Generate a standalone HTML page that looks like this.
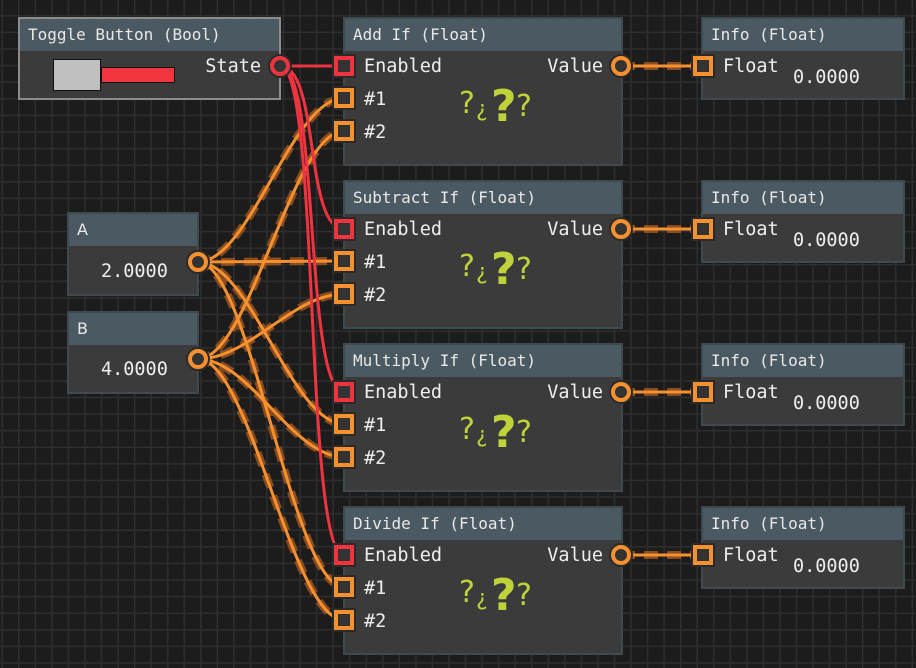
<!DOCTYPE html>
<html><head><meta charset="utf-8"><style>
html,body{margin:0;padding:0}
body{width:916px;height:668px;overflow:hidden;position:relative;background-color:#1c1c1c;
background-image:linear-gradient(to right,#2e2e2e 1.5px,transparent 1.5px),linear-gradient(to bottom,#2e2e2e 1.5px,transparent 1.5px);
background-size:16.55px 16.6px;background-position:1.5px -1.5px;font-family:"DejaVu Sans Mono","Liberation Mono",monospace;}
.n{position:absolute;background:#3b3b3b;border:2px solid #3f4a50;box-sizing:border-box}
.h{position:absolute;left:0;right:0;top:0;height:32px;background:#4b5a62;color:#e8e8e8;font-size:16px;line-height:32px;padding-left:8px;white-space:nowrap}
.t{position:absolute;color:#eee;font-size:18.5px;line-height:22px;white-space:nowrap}
.q{position:absolute;color:#bfd23a;font-family:"DejaVu Sans",sans-serif;font-weight:bold;white-space:nowrap;line-height:1}
svg{position:absolute;left:0;top:0}
</style></head><body>
<svg width="916" height="668" style="z-index:1">
<g fill="none" stroke-linecap="butt">
<g stroke="#9a5520" stroke-width="8" stroke-dasharray="14 9" opacity="0.85">
<path d="M198 262 C250 262,292 98,344 98"/><path d="M198 262 C250 262,292 261,344 261"/><path d="M198 262 C250 262,292 424,344 424"/><path d="M198 262 C250 262,292 587,344 587"/>
<path d="M198 359 C250 359,292 131,344 131"/><path d="M198 359 C250 359,292 294,344 294"/><path d="M198 359 C250 359,292 457,344 457"/><path d="M198 359 C250 359,292 620,344 620"/>
<path d="M621 66 H703"/><path d="M621 229 H703"/><path d="M621 392 H703"/><path d="M621 555 H703"/>
</g>
<g stroke="#f7902e" stroke-width="3">
<path d="M198 262 C250 262,292 98,344 98"/><path d="M198 262 C250 262,292 261,344 261"/><path d="M198 262 C250 262,292 424,344 424"/><path d="M198 262 C250 262,292 587,344 587"/>
<path d="M198 359 C250 359,292 131,344 131"/><path d="M198 359 C250 359,292 294,344 294"/><path d="M198 359 C250 359,292 457,344 457"/><path d="M198 359 C250 359,292 620,344 620"/>
<path d="M621 66 H703"/><path d="M621 229 H703"/><path d="M621 392 H703"/><path d="M621 555 H703"/>
</g>
<g stroke="#f0343f" stroke-width="3">
<path d="M280 66 H344"/><path d="M280 66 C320 66,304 229,344 229"/><path d="M280 66 C320 66,304 392,344 392"/><path d="M280 66 C320 66,304 555,344 555"/>
</g></g></svg>

<div class="n" style="left:18px;top:17px;width:263px;height:83px;border-color:#8c8c8c;z-index:2"><div class="h">Toggle Button (Bool)</div>
<div style="position:absolute;left:33px;top:40px;width:48px;height:32px;background:#c0c0c0;border:1px solid #111;box-sizing:border-box"></div>
<div style="position:absolute;left:81px;top:48px;width:74px;height:16px;background:#f2343f;border:1px solid #111;box-sizing:border-box"></div>
<div class="t" style="right:18px;top:37px">State</div></div>

<div class="n" style="left:67px;top:212px;width:132px;height:84px;z-index:2"><div class="h" style="font-family:'DejaVu Sans',sans-serif">A</div><div class="t" style="left:32px;top:47px">2.0000</div></div>
<div class="n" style="left:67px;top:311px;width:132px;height:83px;z-index:2"><div class="h" style="font-family:'DejaVu Sans',sans-serif">B</div><div class="t" style="left:32px;top:46px">4.0000</div></div>

<div id="ops"></div>
<script>
var names=["Add If (Float)","Subtract If (Float)","Multiply If (Float)","Divide If (Float)"],h="";
for(var i=0;i<4;i++){var y=17+163*i;
h+='<div class="n" style="left:343px;top:'+y+'px;width:280px;height:149px;z-index:2"><div class="h">'+names[i]+'</div>'+
'<div class="t" style="left:19px;top:37px">Enabled</div><div class="t" style="left:19px;top:70px">#1</div><div class="t" style="left:19px;top:103px">#2</div>'+
'<div class="t" style="right:18px;top:37px">Value</div>'+
'<div class="q" style="left:114px;top:70px;font-size:30px;font-weight:normal">?</div><div class="q" style="left:131px;top:80px;font-size:22px;font-weight:normal">¿</div><div class="q" style="left:146px;top:66px;font-size:44px">?</div><div class="q" style="left:171px;top:73px;font-size:30px;font-weight:normal">?</div></div>';
h+='<div class="n" style="left:701px;top:'+y+'px;width:204px;height:83px;z-index:2"><div class="h">Info (Float)</div><div class="t" style="left:20px;top:37px">Float</div><div class="t" style="left:90px;top:48px">0.0000</div></div>';}
document.getElementById("ops").innerHTML=h;
var s='<svg width="916" height="668" style="z-index:3">';
function circ(x,y,c){return '<circle cx="'+x+'" cy="'+y+'" r="12" fill="#2a2a2a"/><circle cx="'+x+'" cy="'+y+'" r="8" fill="#333" stroke="'+c+'" stroke-width="4"/>';}
function sq(x,y,c){return '<rect x="'+(x-12)+'" y="'+(y-12)+'" width="24" height="24" fill="#2a2a2a"/><rect x="'+(x-8)+'" y="'+(y-8)+'" width="16" height="16" fill="#333" stroke="'+c+'" stroke-width="4"/>';}
s+=circ(280,66,"#f0343f")+circ(198,262,"#f7902e")+circ(198,359,"#f7902e");
for(var i=0;i<4;i++){var y=66+163*i;s+=sq(344,y,"#f0343f")+sq(344,y+32,"#f7902e")+sq(344,y+65,"#f7902e")+circ(621,y,"#f7902e")+sq(703,y,"#f7902e");}
s+='</svg>';document.body.insertAdjacentHTML("beforeend",s);
</script>
</body></html>
